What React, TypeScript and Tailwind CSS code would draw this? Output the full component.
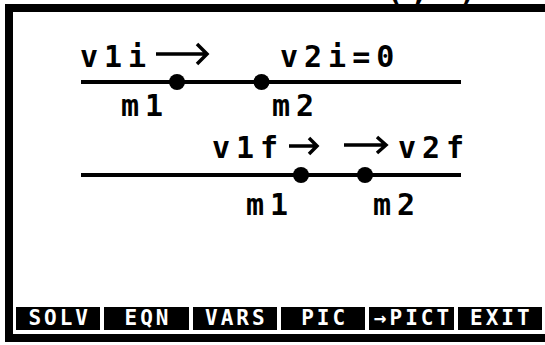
import React from 'react';

const mono = "font-['DejaVu_Sans_Mono',monospace]";

const menuKeys = ['SOLV', 'EQN', 'VARS', 'PIC', '→PICT', 'EXIT'];

// lines, dots and arrows of the collision sketch, in page coordinates
const Sketch = () => (
  <svg className="absolute left-0 top-0 w-[532px] h-[296px]" viewBox="13 12 532 296">
    <g stroke="#000" strokeWidth={4} fill="none">
      <line x1={81} y1={82} x2={461} y2={82} />
      <line x1={81} y1={175} x2={461} y2={175} />
    </g>
    <g fill="#000">
      <circle cx={177} cy={82} r={8} />
      <circle cx={261.5} cy={82} r={8} />
      <circle cx={301} cy={175} r={8} />
      <circle cx={365} cy={175} r={8} />
    </g>
    <g stroke="#000" strokeWidth={3.5} fill="none">
      <path d="M156 54H207M197 44L207 54L197 64" />
      <path d="M289 146H317M309 138L317 146L309 154" />
      <path d="M344 145H386M377 137L386 145L377 153" />
    </g>
  </svg>
);

export default function App() {
  return (
    <div className={`w-[545px] h-[345px] overflow-hidden bg-white ${mono}`}>
      {/* cut-off title above the screen */}
      <div className="h-[4px] overflow-hidden flex items-end pl-[386px]">
        <span className="text-[30px] leading-none font-bold tracking-[6px] text-black translate-y-[3px]">(, )</span>
      </div>

      <div className="w-[560px] h-[338px] ml-[5px] border-l-[8px] border-t-[8px] border-b-[8px] border-black flex flex-col">
        <div className="relative flex-1">
          <Sketch />
          <div className="text-[30px] leading-none font-bold tracking-[6px] text-black">
            <span className="absolute left-[67px] top-[30px]">v1i</span>
            <span className="absolute left-[267px] top-[30px]">v2i=0</span>
            <span className="absolute left-[108px] top-[79px]">m1</span>
            <span className="absolute left-[259px] top-[79px]">m2</span>
            <span className="absolute left-[199px] top-[121px]">v1f</span>
            <span className="absolute left-[385px] top-[121px]">v2f</span>
            <span className="absolute left-[233px] top-[178px]">m1</span>
            <span className="absolute left-[360px] top-[178px]">m2</span>
          </div>
        </div>

        <div className="w-[526px] h-[23px] ml-[3px] mb-[4px] flex gap-[4px]">
          {menuKeys.map((k) => (
            <div
              key={k}
              className="flex-1 bg-black text-white flex items-center justify-center text-[21px] leading-none font-bold tracking-[3px] pl-[3px]"
            >
              {k}
            </div>
          ))}
        </div>
      </div>
    </div>
  );
}
